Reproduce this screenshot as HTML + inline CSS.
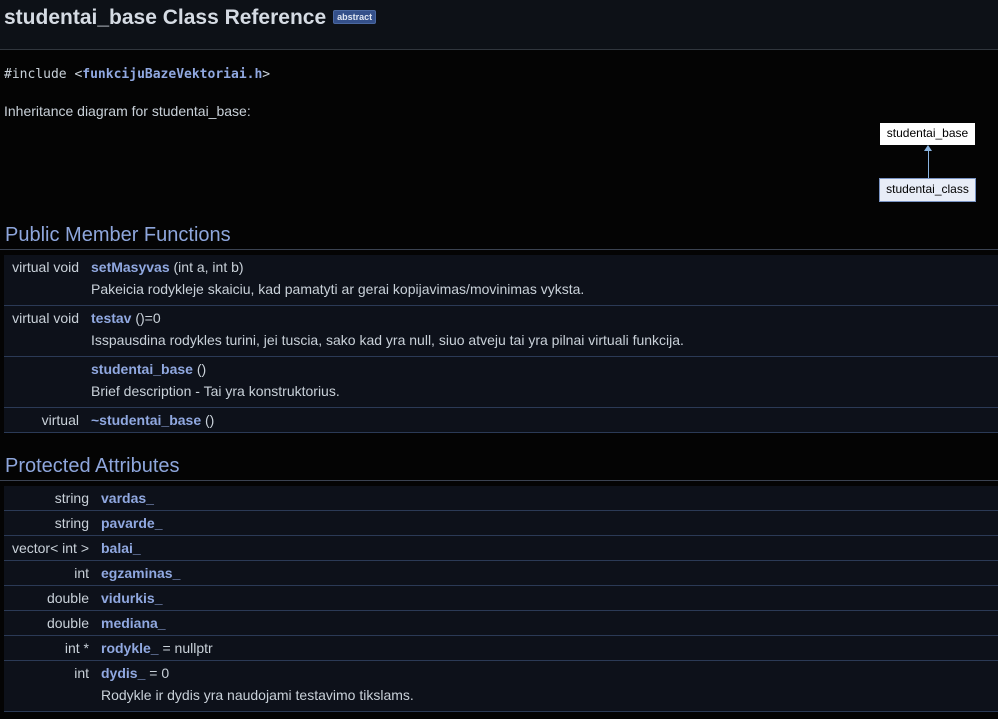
<!DOCTYPE html>
<html><head><meta charset="utf-8"><style>
body{margin:0;background:#040404;font-family:"Liberation Sans",sans-serif;font-size:14px;color:#c9d1d9;width:998px;height:719px;overflow:hidden;position:relative}
.hdr{position:absolute;left:0;top:0;width:998px;height:49px;background:#0d1117;border-bottom:1px solid #30363d}
.title{position:absolute;left:4px;top:6px;font-size:21px;font-weight:bold;color:#d5dbe3}
.badge{display:inline-block;font-size:9px;font-weight:bold;background:#34508a;color:#dfe6f2;border:1px solid #4a68a0;border-radius:2px;padding:1px 3px;vertical-align:4px;margin-left:7px}
.abs{position:absolute}
.mono{font-family:"DejaVu Sans Mono",monospace;font-size:13px}
a{color:#90a8e0;font-weight:bold;text-decoration:none}
h2{position:absolute;left:5px;margin:0;font-size:20px;font-weight:normal;color:#8ea6dc}
.hl{position:absolute;left:0;width:998px;height:1px;background:#3b4352}
.row{position:absolute;left:4px;width:994px;background:#0d111a;border-bottom:1px solid #2b3a56}
.l{position:absolute;text-align:right;white-space:nowrap}
.r{position:absolute;white-space:nowrap}
.box{position:absolute;font-size:12px;color:#000;text-align:center;line-height:21px}
</style></head><body>
<div class="hdr"><div class="title">studentai_base Class Reference<span class="badge">abstract</span></div></div>
<div class="abs mono" style="left:4px;top:67px">#include &lt;<a style="font-weight:bold">funkcijuBazeVektoriai.h</a>&gt;</div>
<div class="abs" style="left:4px;top:103px">Inheritance diagram for studentai_base:</div>
<div class="box" style="left:880px;top:123px;width:95px;height:22px;background:#fff">studentai_base</div>
<div class="abs" style="left:928px;top:150px;width:1px;height:28px;background:#8ab4e0"></div>
<div class="abs" style="left:924px;top:145px;width:0;height:0;border-left:4px solid transparent;border-right:4px solid transparent;border-bottom:6px solid #8ab4e0"></div>
<div class="box" style="left:879px;top:178px;width:95px;height:22px;background:#e8edf7;border:1px solid #7a94c4">studentai_class</div>

<h2 style="top:224px">Public Member Functions</h2>
<div class="hl" style="top:249px"></div>
<div class="row" style="top:255px;height:50px"><div class="l" style="right:919px;top:4px">virtual void</div><div class="r" style="left:87px;top:4px"><a>setMasyvas</a> (int a, int b)</div><div class="r" style="left:87px;top:26px">Pakeicia rodykleje skaiciu, kad pamatyti ar gerai kopijavimas/movinimas vyksta.</div></div>
<div class="row" style="top:306px;height:50px"><div class="l" style="right:919px;top:4px">virtual void</div><div class="r" style="left:87px;top:4px"><a>testav</a> ()=0</div><div class="r" style="left:87px;top:26px">Isspausdina rodykles turini, jei tuscia, sako kad yra null, siuo atveju tai yra pilnai virtuali funkcija.</div></div>
<div class="row" style="top:357px;height:50px"><div class="r" style="left:87px;top:4px"><a>studentai_base</a> ()</div><div class="r" style="left:87px;top:26px">Brief description - Tai yra konstruktorius.</div></div>
<div class="row" style="top:408px;height:24px"><div class="l" style="right:919px;top:4px">virtual</div><div class="r" style="left:87px;top:4px"><a>~studentai_base</a> ()</div></div>

<h2 style="top:455px">Protected Attributes</h2>
<div class="hl" style="top:480px"></div>
<div class="row" style="top:486px;height:24px"><div class="l" style="right:909px;top:4px">string</div><div class="r" style="left:97px;top:4px"><a>vardas_</a></div></div>
<div class="row" style="top:511px;height:24px"><div class="l" style="right:909px;top:4px">string</div><div class="r" style="left:97px;top:4px"><a>pavarde_</a></div></div>
<div class="row" style="top:536px;height:24px"><div class="l" style="right:909px;top:4px">vector&lt; int &gt;</div><div class="r" style="left:97px;top:4px"><a>balai_</a></div></div>
<div class="row" style="top:561px;height:24px"><div class="l" style="right:909px;top:4px">int</div><div class="r" style="left:97px;top:4px"><a>egzaminas_</a></div></div>
<div class="row" style="top:586px;height:24px"><div class="l" style="right:909px;top:4px">double</div><div class="r" style="left:97px;top:4px"><a>vidurkis_</a></div></div>
<div class="row" style="top:611px;height:24px"><div class="l" style="right:909px;top:4px">double</div><div class="r" style="left:97px;top:4px"><a>mediana_</a></div></div>
<div class="row" style="top:636px;height:24px"><div class="l" style="right:909px;top:4px">int *</div><div class="r" style="left:97px;top:4px"><a>rodykle_</a> = nullptr</div></div>
<div class="row" style="top:661px;height:50px"><div class="l" style="right:909px;top:4px">int</div><div class="r" style="left:97px;top:4px"><a>dydis_</a> = 0</div><div class="r" style="left:97px;top:26px">Rodykle ir dydis yra naudojami testavimo tikslams.</div></div>
</body></html>
